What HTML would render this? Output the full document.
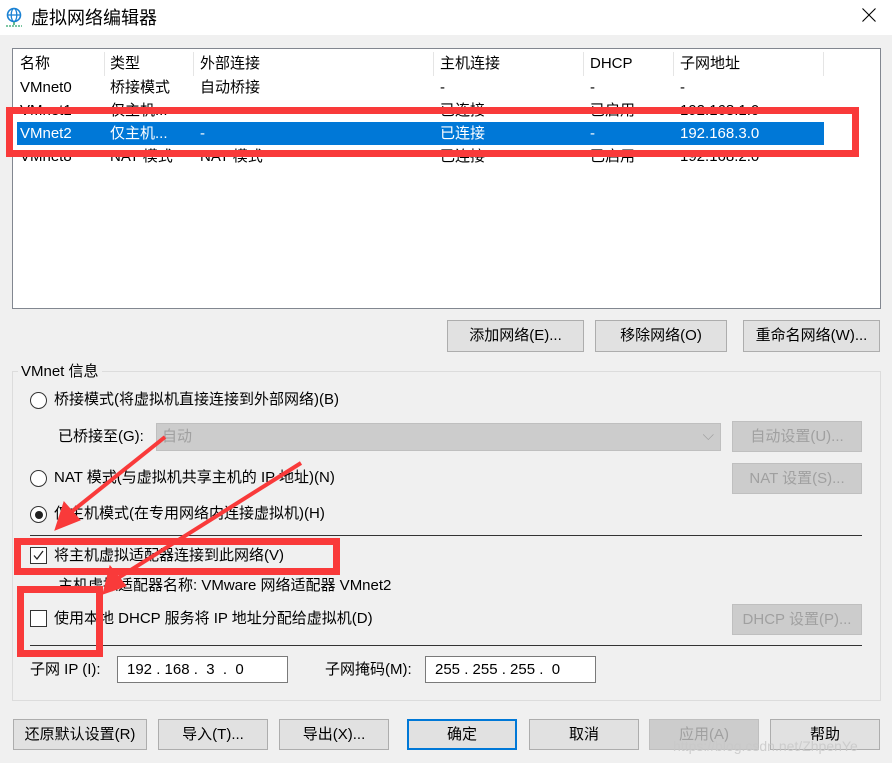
<!DOCTYPE html>
<html><head><meta charset="utf-8"><style>
*{margin:0;padding:0;box-sizing:border-box}
body{width:892px;height:763px;background:#f0f0f0;position:relative;overflow:hidden;font-family:"Liberation Sans","Noto Sans CJK SC",sans-serif;font-size:15px;line-height:20px;color:#000}
.a{position:absolute;white-space:nowrap;line-height:20px}
.btn{position:absolute;background:#e1e1e1;border:1px solid #adadad;text-align:center;line-height:29px;font-size:15px}
.dis{color:#a0a0a0;background:#cccccc;border-color:#bfbfbf}
.rad{position:absolute;width:17px;height:17px;border:1px solid #333;border-radius:50%;background:#fff}
.chk{position:absolute;width:17px;height:17px;border:1px solid #333;background:#fff}
.inp{position:absolute;background:#fff;border:1px solid #7a7a7a;height:27px;line-height:25px;padding-left:9px}
.red{position:absolute;border:7px solid #f93a3a}
</style></head><body>
<div class="a" style="left:0;top:0;width:892px;height:35px;background:#fff"></div>
<svg class="a" style="left:5px;top:7px" width="18" height="20" viewBox="0 0 18 20"><circle cx="9" cy="8" r="6.5" fill="none" stroke="#1b82d4" stroke-width="1.6"/><ellipse cx="9" cy="8" rx="2.8" ry="6.5" fill="none" stroke="#1b82d4" stroke-width="1.3"/><line x1="2.5" y1="8" x2="15.5" y2="8" stroke="#1b82d4" stroke-width="1.3"/><line x1="9" y1="15" x2="9" y2="18" stroke="#2fa36a" stroke-width="1.5"/><line x1="1" y1="19" x2="17" y2="19" stroke="#2fa36a" stroke-width="1.3" stroke-dasharray="2 1"/></svg>
<div class="a" style="left:31px;top:7px;font-size:18px;line-height:22px">虚拟网络编辑器</div>
<svg class="a" style="left:862px;top:8px" width="14" height="14"><path d="M0.5 0.5L13.5 13.5M13.5 0.5L0.5 13.5" stroke="#000" stroke-width="1.1"/></svg>

<div class="a" style="left:12px;top:48px;width:869px;height:261px;background:#fff;border:1px solid #828790"></div>
<div class="a" style="left:17px;top:122px;width:807px;height:23px;background:#0078d7"></div>
<div class="a" style="left:104px;top:52px;width:1px;height:24px;background:#e5e5e5"></div>
<div class="a" style="left:193px;top:52px;width:1px;height:24px;background:#e5e5e5"></div>
<div class="a" style="left:433px;top:52px;width:1px;height:24px;background:#e5e5e5"></div>
<div class="a" style="left:583px;top:52px;width:1px;height:24px;background:#e5e5e5"></div>
<div class="a" style="left:673px;top:52px;width:1px;height:24px;background:#e5e5e5"></div>
<div class="a" style="left:823px;top:52px;width:1px;height:24px;background:#e5e5e5"></div>
<div class="a" style="top:54px;left:20px">名称</div><div class="a" style="top:54px;left:110px">类型</div><div class="a" style="top:54px;left:200px">外部连接</div><div class="a" style="top:54px;left:440px">主机连接</div><div class="a" style="top:54px;left:590px">DHCP</div><div class="a" style="top:54px;left:680px">子网地址</div>
<div class="a" style="top:78px;left:20px">VMnet0</div><div class="a" style="top:78px;left:110px">桥接模式</div><div class="a" style="top:78px;left:200px">自动桥接</div><div class="a" style="top:78px;left:440px">-</div><div class="a" style="top:78px;left:590px">-</div><div class="a" style="top:78px;left:680px">-</div>
<div class="a" style="top:101px;left:20px">VMnet1</div><div class="a" style="top:101px;left:110px">仅主机...</div><div class="a" style="top:101px;left:440px">已连接</div><div class="a" style="top:101px;left:590px">已启用</div><div class="a" style="top:101px;left:680px">192.168.1.0</div>
<div class="a" style="top:124px;left:20px;color:#fff">VMnet2</div><div class="a" style="top:124px;left:110px;color:#fff">仅主机...</div><div class="a" style="top:124px;left:200px;color:#fff">-</div><div class="a" style="top:124px;left:440px;color:#fff">已连接</div><div class="a" style="top:124px;left:590px;color:#fff">-</div><div class="a" style="top:124px;left:680px;color:#fff">192.168.3.0</div>
<div class="a" style="top:147px;left:20px">VMnet8</div><div class="a" style="top:147px;left:110px">NAT 模式</div><div class="a" style="top:147px;left:200px">NAT 模式</div><div class="a" style="top:147px;left:440px">已连接</div><div class="a" style="top:147px;left:590px">已启用</div><div class="a" style="top:147px;left:680px">192.168.2.0</div>
<div class="red" style="left:6px;top:107px;width:853px;height:50px;border-width:7px;"></div>

<div class="btn" style="left:447px;top:320px;width:137px;height:32px">添加网络(E)...</div>
<div class="btn" style="left:595px;top:320px;width:132px;height:32px">移除网络(O)</div>
<div class="btn" style="left:743px;top:320px;width:137px;height:32px">重命名网络(W)...</div>

<div class="a" style="left:12px;top:371px;width:869px;height:330px;border:1px solid #dcdcdc"></div>
<div class="a" style="left:18px;top:362px;background:#f0f0f0;padding:0 3px">VMnet 信息</div>
<div class="rad" style="left:30px;top:392px"></div><div class="a" style="left:54px;top:390px">桥接模式(将虚拟机直接连接到外部网络)(B)</div>
<div class="a" style="left:58px;top:427px">已桥接至(G):</div>
<div class="a" style="left:156px;top:423px;width:565px;height:28px;background:#cccccc;border:1px solid #bfbfbf;color:#a0a0a0;padding:3px 5px">自动<span style="position:absolute;right:6px;top:2px">⌵</span></div>
<div class="btn dis" style="left:732px;top:421px;width:130px;height:31px">自动设置(U)...</div>
<div class="rad" style="left:30px;top:470px"></div><div class="a" style="left:54px;top:468px">NAT 模式(与虚拟机共享主机的 IP 地址)(N)</div>
<div class="btn dis" style="left:732px;top:463px;width:130px;height:31px">NAT 设置(S)...</div>
<div class="rad" style="left:30px;top:506px"></div><div class="a" style="left:35px;top:511px;width:8px;height:8px;border-radius:50%;background:#222"></div><div class="a" style="left:54px;top:504px">仅主机模式(在专用网络内连接虚拟机)(H)</div>
<div class="a" style="left:30px;top:535px;width:832px;height:1px;background:#333"></div>
<div class="chk" style="left:30px;top:547px"></div><svg class="a" style="left:30px;top:547px" width="17" height="17"><path d="M4 8.5L7 12L13 4" fill="none" stroke="#222" stroke-width="1.3"/></svg><div class="a" style="left:54px;top:546px">将主机虚拟适配器连接到此网络(V)</div>
<div class="a" style="left:58px;top:576px">主机虚拟适配器名称: VMware 网络适配器 VMnet2</div>
<div class="chk" style="left:30px;top:610px"></div><div class="a" style="left:54px;top:609px">使用本地 DHCP 服务将 IP 地址分配给虚拟机(D)</div>
<div class="btn dis" style="left:732px;top:604px;width:130px;height:31px">DHCP 设置(P)...</div>
<div class="a" style="left:30px;top:645px;width:832px;height:1px;background:#333"></div>
<div class="a" style="left:30px;top:660px">子网 IP (I):</div>
<div class="inp" style="left:117px;top:656px;width:171px">192 . 168 .&nbsp; 3 &nbsp;.&nbsp; 0</div>
<div class="a" style="left:325px;top:660px">子网掩码(M):</div>
<div class="inp" style="left:425px;top:656px;width:171px">255 . 255 . 255 .&nbsp; 0</div>

<div class="red" style="left:14px;top:538px;width:326px;height:37px"></div>
<div class="red" style="left:17px;top:586px;width:86px;height:71px"></div>

<svg class="a" style="left:0;top:0" width="892" height="763"><g fill="#f93a3a" stroke="#f93a3a"><line x1="165" y1="437" x2="70" y2="513" stroke-width="4"/><polygon points="55,530 64,502 80,520"/><line x1="301" y1="463" x2="118" y2="578" stroke-width="4"/><polygon points="103,594 110,566 126,586"/></g></svg>

<div class="btn" style="left:13px;top:719px;width:134px;height:31px">还原默认设置(R)</div>
<div class="btn" style="left:158px;top:719px;width:110px;height:31px">导入(T)...</div>
<div class="btn" style="left:279px;top:719px;width:110px;height:31px">导出(X)...</div>
<div class="btn" style="left:407px;top:719px;width:110px;height:31px;border:2px solid #0078d7;line-height:27px">确定</div>
<div class="btn" style="left:529px;top:719px;width:110px;height:31px">取消</div>
<div class="btn dis" style="left:649px;top:719px;width:110px;height:31px">应用(A)</div>
<div class="btn" style="left:770px;top:719px;width:110px;height:31px">帮助</div>
<div class="a" style="left:673px;top:736px;font-size:14px;color:rgba(200,200,200,0.85)">https://blog.csdn.net/ZhpenYe</div>
</body></html>
